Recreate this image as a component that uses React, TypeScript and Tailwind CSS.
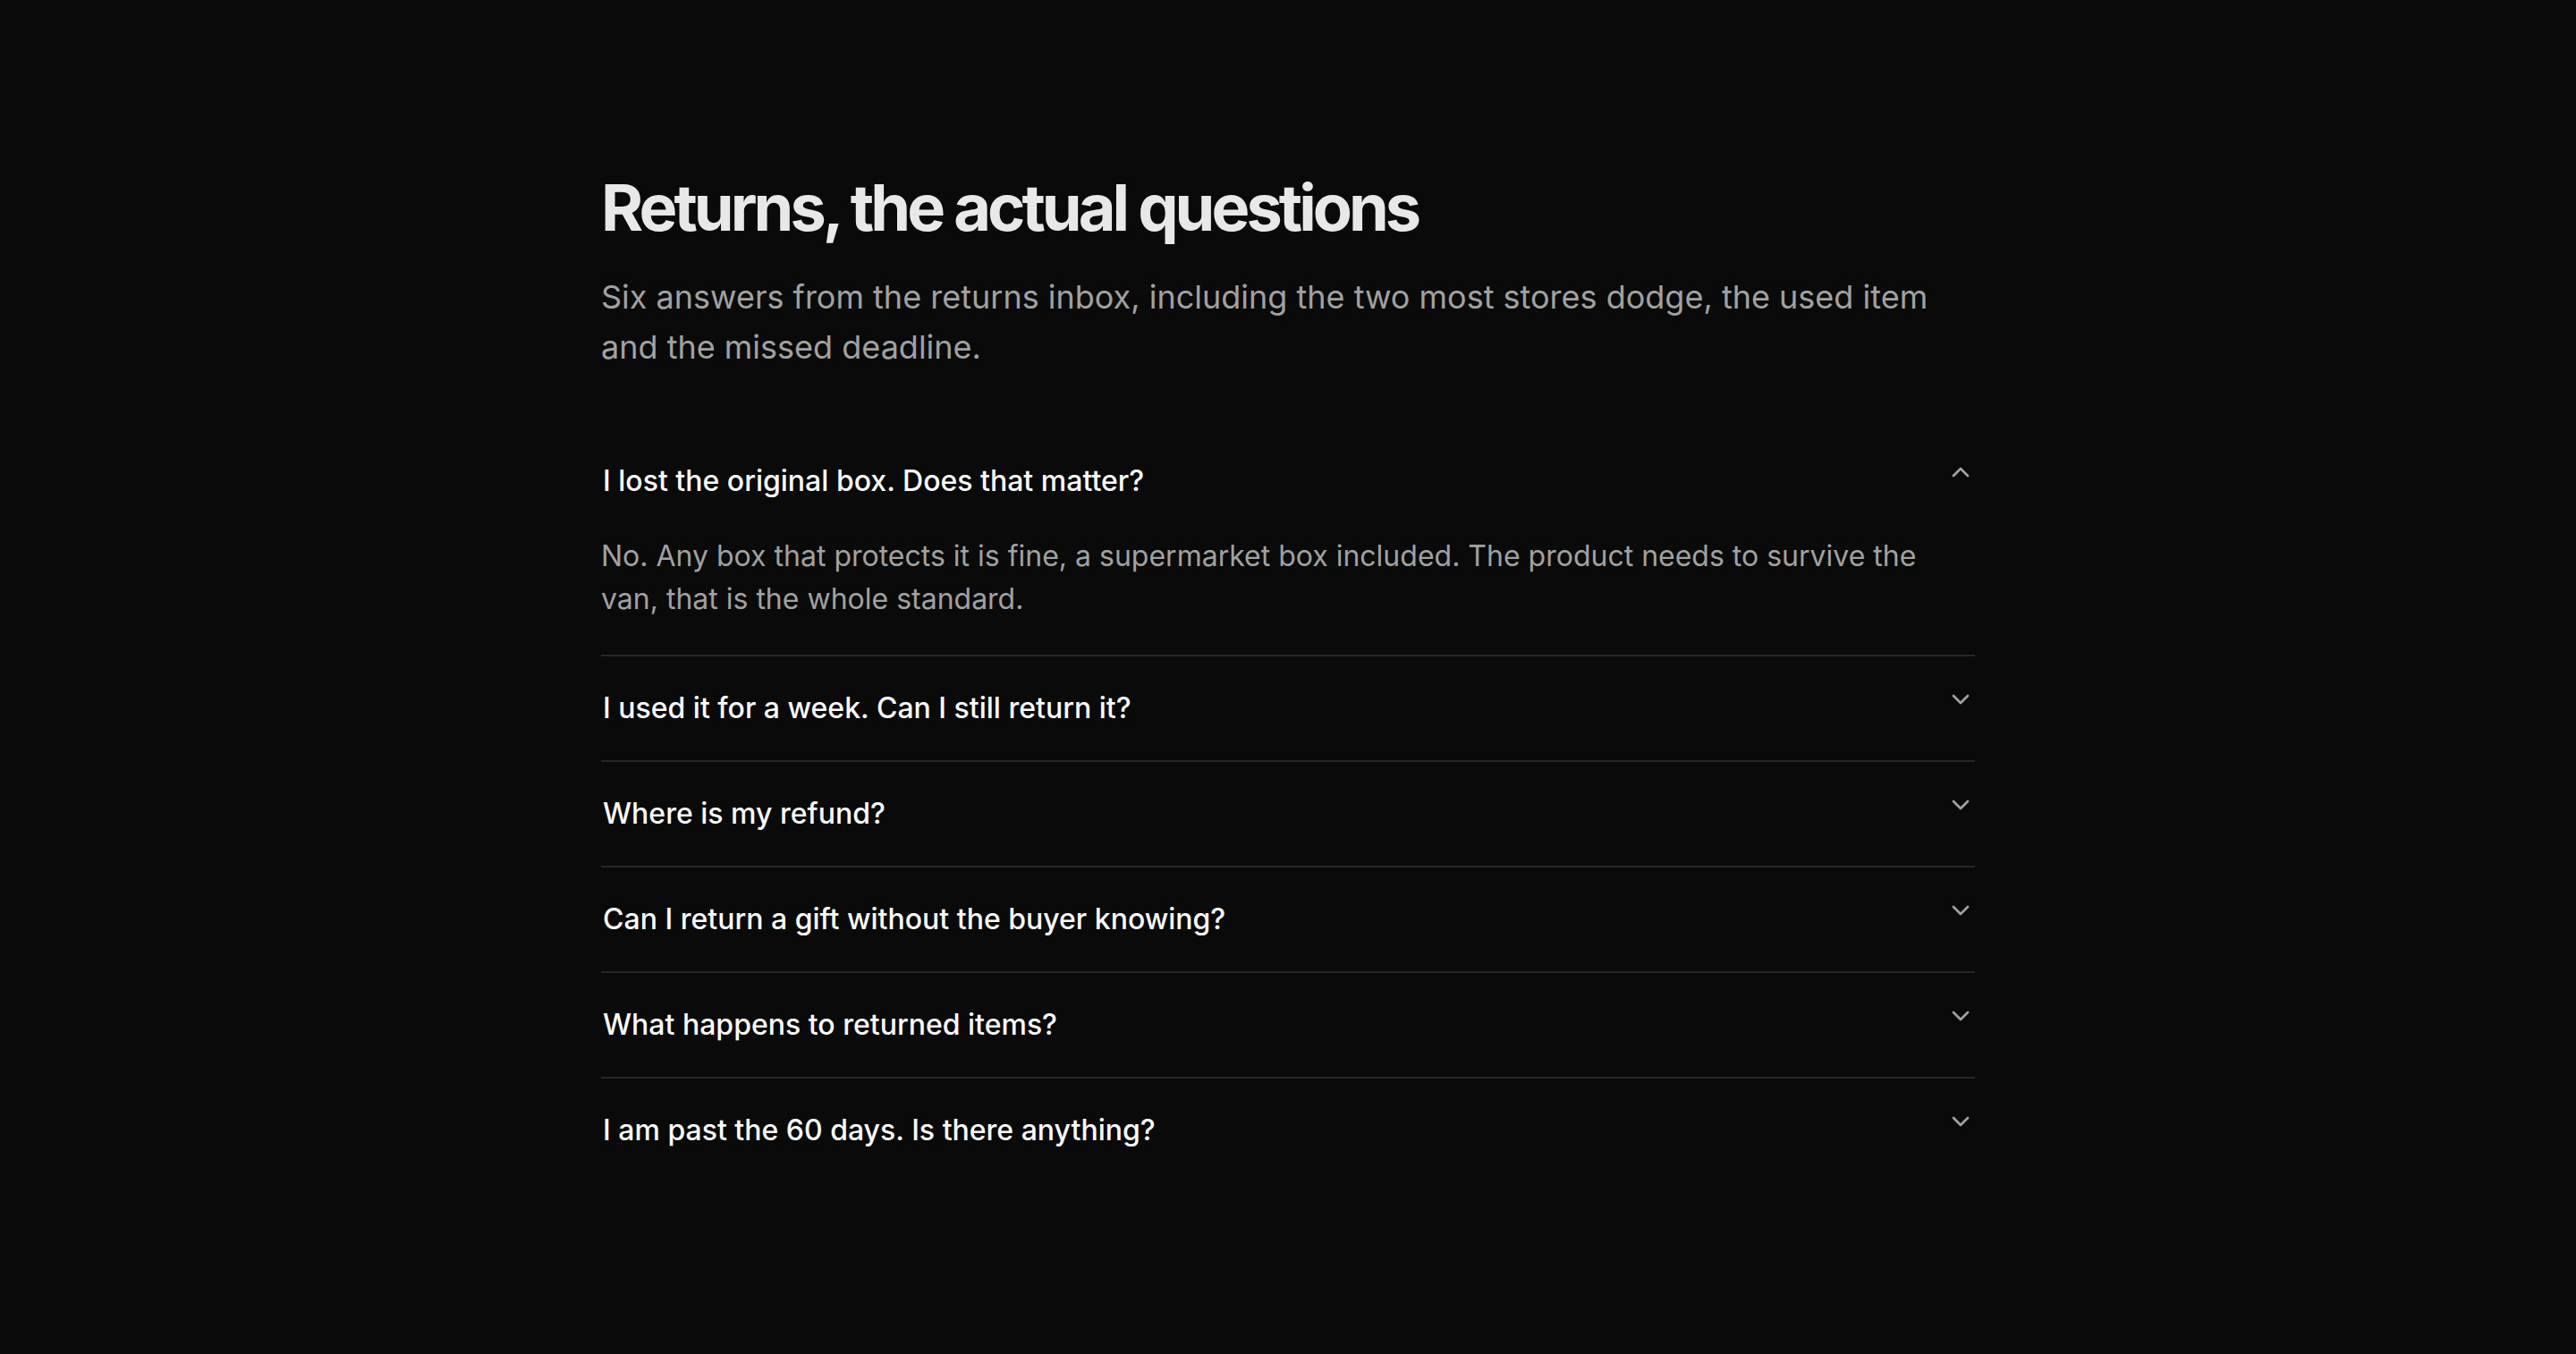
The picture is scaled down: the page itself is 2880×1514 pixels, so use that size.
import React, { useState } from 'react';
import { ChevronDown } from 'lucide-react';

interface FaqItem {
  question: string;
  answer: string;
}

const faqs: FaqItem[] = [
  {
    question: 'I lost the original box. Does that matter?',
    answer:
      'No. Any box that protects it is fine, a supermarket box included. The product needs to survive the van, that is the whole standard.',
  },
  {
    question: 'I used it for a week. Can I still return it?',
    answer:
      'Yes. Normal use inside the 60 days is what the window is for. We only refuse items that are damaged beyond ordinary wear.',
  },
  {
    question: 'Where is my refund?',
    answer:
      'Refunds go out the day the parcel is scanned at our warehouse. Your bank usually needs three to five working days after that.',
  },
  {
    question: 'Can I return a gift without the buyer knowing?',
    answer:
      'Yes. Use the gift receipt code and the refund comes to you as store credit. The buyer is not told.',
  },
  {
    question: 'What happens to returned items?',
    answer:
      'Anything in good shape is checked and resold as open box. The rest is repaired, donated or recycled, in that order.',
  },
  {
    question: 'I am past the 60 days. Is there anything?',
    answer:
      'Write to us anyway. A few days late with a good reason is usually fine, and faults are covered by the warranty either way.',
  },
];

const AccordionRow: React.FC<{
  item: FaqItem;
  open: boolean;
  last: boolean;
  onToggle: () => void;
}> = ({ item, open, last, onToggle }) => {
  return (
    <div className={last ? '' : 'border-b-2 border-[#262626]'}>
      <button
        type="button"
        onClick={onToggle}
        className="flex w-full items-start justify-between gap-8 py-8 text-left text-[32px] leading-[52px] font-medium text-[#fafafa]"
      >
        <span className="pl-[2px]">{item.question}</span>
        <ChevronDown
          className={`size-8 shrink-0 text-[#a1a1a1] transition-transform duration-200 ${open ? 'rotate-180' : ''}`}
          strokeWidth={2}
        />
      </button>
      {open && (
        <div className="pt-[2px] pb-[38px] pr-16 text-[32px] leading-[48px] text-[#a1a1a1]">{item.answer}</div>
      )}
    </div>
  );
};

export default function App() {
  const [openIndex, setOpenIndex] = useState<number | null>(0);

  return (
    <div className="min-h-screen bg-[#0a0a0a] font-['Inter',sans-serif]">
      <div className="mx-auto max-w-[1536px] pt-48 pb-24">
        <h1 className="text-[72px] leading-[80px] font-bold tracking-[-0.055em] text-[#e8e8e8]">
          Returns, the actual questions
        </h1>
        <p className="mt-8 text-[36px] leading-[56px] text-[#a1a1a1]">
          Six answers from the returns inbox, including the two most stores dodge, the used item and
          the missed deadline.
        </p>

        <div className="mt-16">
          {faqs.map((item, i) => (
            <AccordionRow
              key={item.question}
              item={item}
              open={openIndex === i}
              last={i === faqs.length - 1}
              onToggle={() => setOpenIndex(openIndex === i ? null : i)}
            />
          ))}
        </div>
      </div>
    </div>
  );
}
